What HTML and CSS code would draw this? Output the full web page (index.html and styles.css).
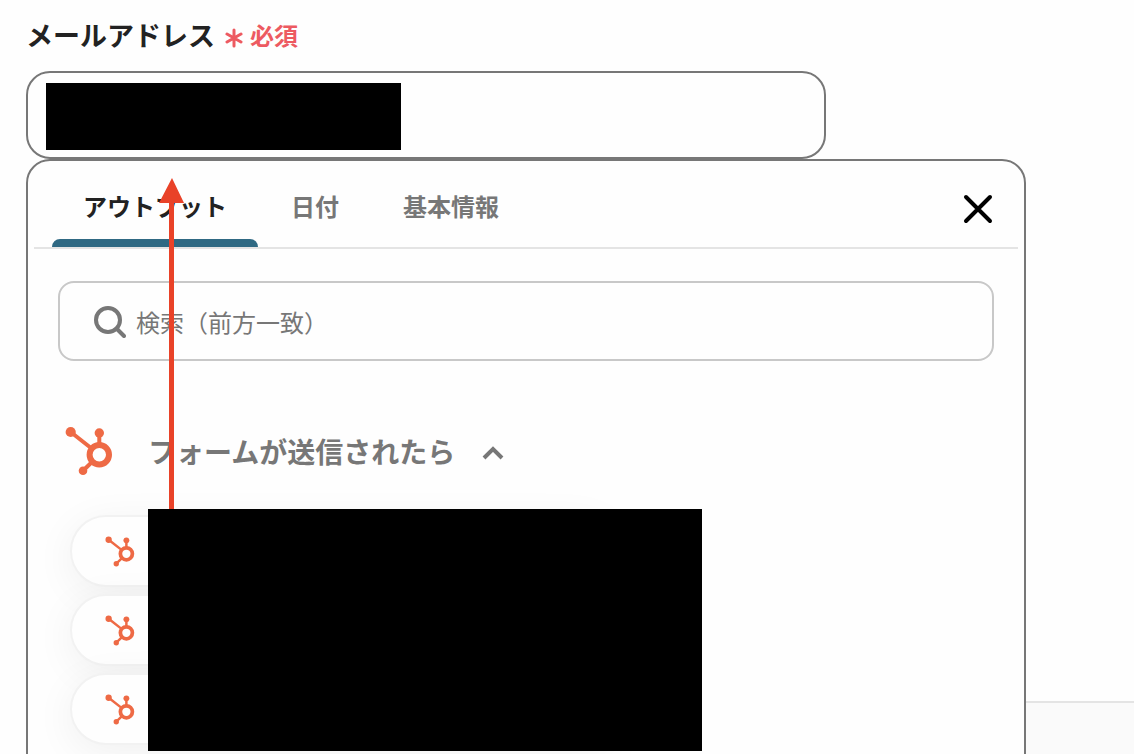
FILE: index.html
```html
<!DOCTYPE html>
<html lang="ja">
<head>
<meta charset="utf-8">
<title>メールアドレス</title>
<link rel="stylesheet" href="styles.css">
</head>
<body>
<svg class="sprite" aria-hidden="true">
  <symbol id="hub" viewBox="0 0 48 50">
    <g fill="none" stroke="#ee6a45">
      <path stroke-width="4" d="M5.700 6 26 22M34.300 7V20M18 44.700 28 35"/>
      <circle cx="34.300" cy="28.700" r="9.700" stroke-width="6"/>
    </g>
    <g fill="#ee6a45">
      <circle cx="5.700" cy="6" r="5.100"/>
      <circle cx="34.300" cy="7" r="4.700"/>
      <circle cx="18" cy="44.700" r="4.300"/>
    </g>
  </symbol>
</svg>
<div class="page">
  <main class="form">
    <div class="label-row">
      <label class="label" for="email">メールアドレス</label>
      <span class="required">
        <svg class="asterisk" viewBox="0 0 18 20" aria-hidden="true"><path d="M9 2V18M2 6 16 14M16 6 2 14"/></svg>
        必須
      </span>
    </div>
    <div class="field">
      <input class="input" id="email" type="text">
      <div class="mask mask-input"></div>
      <section class="panel">
        <div class="panel-head">
          <div class="tabs" role="tablist">
            <button class="tab active" role="tab" aria-selected="true">アウトプット</button>
            <button class="tab" role="tab" aria-selected="false">日付</button>
            <button class="tab" role="tab" aria-selected="false">基本情報</button>
          </div>
          <button class="close" aria-label="閉じる">
            <svg viewBox="0 0 30 30" width="30" height="30"><path d="M3 3 27 27M27 3 3 27"/></svg>
          </button>
        </div>
        <div class="search">
          <svg class="search-icon" viewBox="0 0 32 32" aria-hidden="true"><circle cx="14" cy="14" r="12"/><path d="M22.500 22.500 30 30"/></svg>
          <input class="search-input" type="search" placeholder="検索（前方一致）" aria-label="検索（前方一致）">
        </div>
        <button class="group">
          <svg class="hub-large" aria-hidden="true"><use href="#hub"/></svg>
          <span class="group-title">フォームが送信されたら</span>
          <svg class="chevron" viewBox="0 0 22 14" aria-hidden="true"><path d="M2 12 11 3 20 12"/></svg>
        </button>
        <div class="results">
          <button class="chip" aria-label="HubSpot"><svg class="hub-small"><use href="#hub"/></svg></button>
          <button class="chip" aria-label="HubSpot"><svg class="hub-small"><use href="#hub"/></svg></button>
          <button class="chip" aria-label="HubSpot"><svg class="hub-small"><use href="#hub"/></svg></button>
          <div class="mask mask-results"></div>
        </div>
        <svg class="arrow" viewBox="0 0 26 331" aria-hidden="true"><path d="M13 0 25 25H15V331H10V25H0Z"/></svg>
      </section>
    </div>
  </main>
  <footer class="footer"></footer>
</div>
</body>
</html>
```
FILE: styles.css
```css
* { box-sizing: border-box; }

body {
  margin: 0;
  background: #fefefe;
  color: #222;
  font-family: "Noto Sans CJK JP", sans-serif;
}

button, input { font: inherit; color: inherit; }
button { border: 0; background: none; padding: 0; cursor: pointer; }

.sprite { position: absolute; width: 0; height: 0; }

.page {
  display: flex;
  flex-direction: column;
  height: 100vh;
  overflow: hidden;
}

.form {
  flex: 1;
  min-height: 0;
  padding: 15px 26px 0;
}

.label-row {
  display: flex;
  align-items: center;
  gap: 10px;
  height: 40px;
  margin-bottom: 16px;
}

.label { font-size: 27px; font-weight: 700; line-height: 40px; }

.required {
  display: flex;
  align-items: center;
  gap: 7px;
  color: #ed5a61;
  font-size: 24px;
  font-weight: 700;
  line-height: 40px;
}

.asterisk {
  width: 18px;
  height: 20px;
  margin-top: 6px;
  fill: none;
  stroke: currentColor;
  stroke-width: 3;
  stroke-linecap: round;
}

.field { position: relative; max-width: 1000px; }

.input {
  display: block;
  width: 80%;
  height: 88px;
  padding: 0 18px;
  border: 2px solid #777;
  border-radius: 24px;
  background: #fefefe;
  font-size: 28px;
}

.mask { position: absolute; background: #000; }
.mask-input { left: 20px; top: 12px; width: 355px; height: 67px; }

.panel {
  position: absolute;
  top: 100%;
  left: 0;
  width: 100%;
  padding: 0 6px 48px;
  border: 2px solid #777;
  border-radius: 24px;
  background: #fefefe;
}

.panel-head {
  display: flex;
  justify-content: space-between;
  align-items: center;
  height: 88px;
  padding: 0 25px 0 18px;
  border-bottom: 2px solid #e4e4e4;
}

.tabs { display: flex; gap: 2px; height: 100%; }

.tab {
  position: relative;
  padding: 2px 31px 0;
  color: #777;
  font-size: 24px;
  font-weight: 700;
}

.tab.active { color: #222; }

.tab.active::after {
  content: "";
  position: absolute;
  left: 0;
  right: 0;
  bottom: 0;
  height: 8px;
  border-radius: 8px 8px 0 0;
  background: #2f6983;
}

.close { display: flex; margin-top: 10px; }
.close path { fill: none; stroke: #000; stroke-width: 4; stroke-linecap: round; }

.search {
  display: flex;
  align-items: center;
  gap: 10px;
  height: 80px;
  margin: 32px 24px 0;
  padding: 2px 34px 0;
  border: 2px solid #c8c8c8;
  border-radius: 16px;
}

.search-icon {
  width: 32px;
  height: 32px;
  flex: none;
  fill: none;
  stroke: #777;
  stroke-width: 4;
  stroke-linecap: round;
}

.search-input {
  flex: 1;
  min-width: 0;
  padding: 0 0 2px;
  border: 0;
  outline: 0;
  background: none;
  font-size: 24px;
}

.search-input::placeholder { color: #777; opacity: 1; }

.group {
  display: flex;
  align-items: center;
  margin: 65px 31px 0;
  color: #777;
}

.hub-large { width: 48px; height: 50px; }

.group-title {
  margin: 0 27px 0 35px;
  font-size: 28px;
  font-weight: 700;
  line-height: 50px;
}

.chevron {
  width: 22px;
  height: 14px;
  margin-top: 4px;
  fill: none;
  stroke: currentColor;
  stroke-width: 4;
}

.results {
  position: relative;
  display: flex;
  flex-direction: column;
  gap: 7px;
  margin: 39px 36px 0;
}

.chip {
  display: flex;
  align-items: center;
  width: 60%;
  height: 72px;
  padding: 0 33px;
  border: 2px solid #f2f2f2;
  border-radius: 36px;
  background: #fefefe;
  box-shadow: 0 8px 40px rgba(0, 0, 0, 0.06);
}

.hub-small { width: 30px; height: 31px; }

.mask-results { left: 78px; top: -6px; width: 554px; height: 242px; }

.arrow {
  position: absolute;
  left: 131px;
  top: 17px;
  width: 26px;
  height: 331px;
  fill: #e94228;
}

.footer {
  flex: none;
  height: 53px;
  margin-left: 52px;
  border-top: 2px solid #e4e4e4;
  background: #fafafa;
}
```
